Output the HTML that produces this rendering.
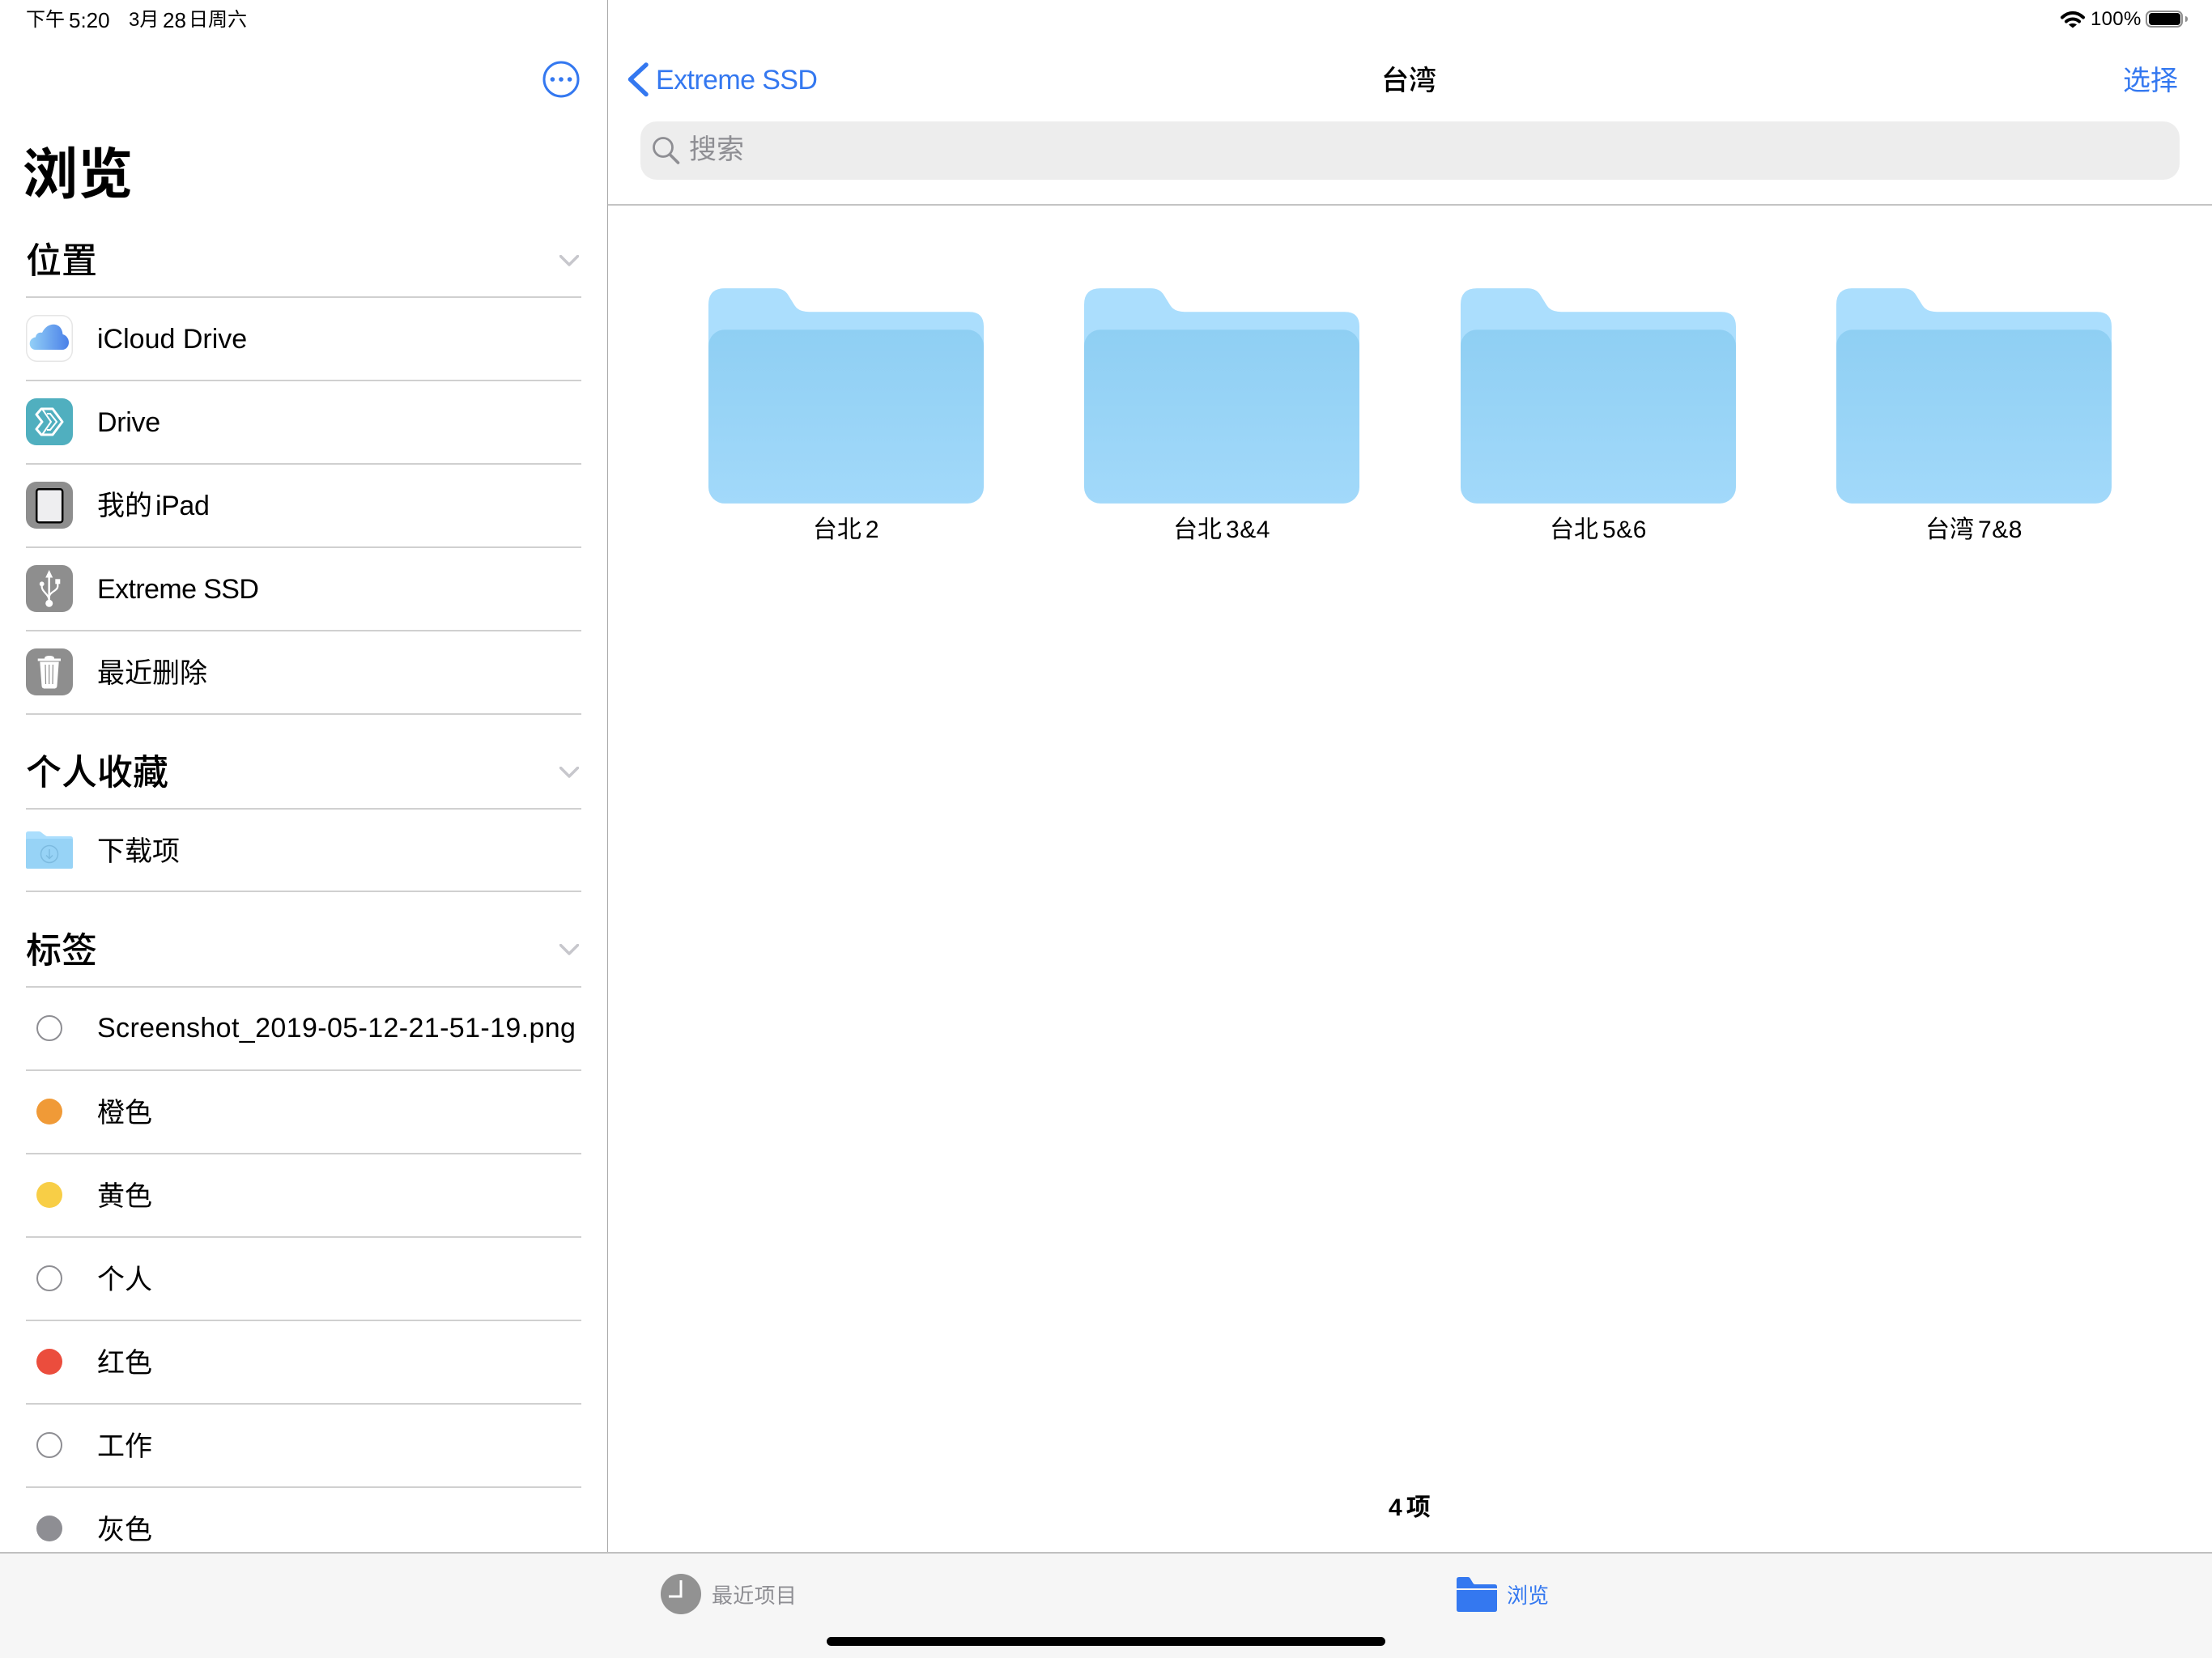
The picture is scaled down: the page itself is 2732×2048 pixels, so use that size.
<!DOCTYPE html>
<html lang="zh-CN">
<head>
<meta charset="utf-8">
<title>浏览</title>
<style>
html,body{margin:0;padding:0;width:2732px;height:2048px;overflow:hidden;background:#fff}
body{position:relative;font-family:"Liberation Sans","Noto Sans CJK SC",sans-serif;color:#000}
.t{position:absolute;white-space:nowrap;line-height:60px;height:60px;font-size:34px}
.h{font-size:44px;font-weight:500}
.s{font-size:24px}
.d{font-size:26px}
.l{position:absolute;left:32px;width:686px;height:2px;background:#d0d0d0}
.i{position:absolute;left:32px;width:58px;height:58px}
.c{position:absolute;left:45px;width:32px;height:32px;border-radius:50%;box-sizing:border-box}
.o{border:2px solid #8e8e93;background:#fff}
.f{position:absolute;top:356px;width:340px;height:266px}
.n{position:absolute;top:625px;width:340px;text-align:center;font-size:30px;line-height:60px;white-space:nowrap}
.n i{font-style:normal;margin-left:5px;letter-spacing:.5px}
.v{position:absolute;left:691px;width:24px;height:14px}
.b{color:#3478f0}
svg{display:block}
</style>
</head>
<body>
<div style="position:absolute;left:750px;top:0;width:1px;height:1917px;background:#a8a8a8"></div>

<!-- status bar -->
<div class="t s" style="left:32px;top:-5px">下午</div>
<div class="t d" style="left:85px;top:-5px">5:20</div>
<div class="t s" style="left:159px;top:-5px">3月</div>
<div class="t d" style="left:201px;top:-5px">28</div>
<div class="t s" style="left:233px;top:-5px">日周六</div>
<svg style="position:absolute;left:2544px;top:12px" width="32" height="24" viewBox="0 0 32 24">
<path d="M3 9.500C11 2 21 2 29 9.500" fill="none" stroke="#000" stroke-width="4" stroke-linecap="round"/>
<path d="M8 14.500C12.500 10.500 19.500 10.500 24 14.500" fill="none" stroke="#000" stroke-width="4" stroke-linecap="round"/>
<path d="M11 18.500C14 16.300 18 16.300 21 18.500L16 22.500Z" fill="#000"/>
</svg>
<div class="t s" style="left:2582px;top:-6px;letter-spacing:0.3px">100%</div>
<div style="position:absolute;left:2650px;top:13px;width:46px;height:21px;box-sizing:border-box;border:2px solid #8e8e8e;border-radius:7px"></div>
<div style="position:absolute;left:2654px;top:16px;width:39px;height:15px;background:#000;border-radius:4px"></div>
<div style="position:absolute;left:2699px;top:20px;width:3px;height:7px;background:#8e8e8e;border-radius:0 3px 3px 0"></div>

<!-- sidebar -->
<svg style="position:absolute;left:670px;top:75px" width="46" height="46" viewBox="0 0 46 46">
<circle cx="23" cy="23" r="21" fill="none" stroke="#3478f0" stroke-width="3"/>
<circle cx="12.400" cy="23" r="2.800" fill="#3478f0"/><circle cx="23" cy="23" r="2.800" fill="#3478f0"/><circle cx="33.600" cy="23" r="2.800" fill="#3478f0"/>
</svg>
<div class="t" style="left:28px;top:176px;font-size:68px;line-height:80px;height:80px;font-weight:700">浏览</div>

<div class="t h" style="left:32px;top:293px">位置</div>
<svg class="v" style="top:315px" viewBox="0 0 24 14"><path d="M1.500 1.500L12 12L22.500 1.500" fill="none" stroke="#c7c7cc" stroke-width="3.500" stroke-linecap="round" stroke-linejoin="round"/></svg>
<div class="l" style="top:366px"></div>

<svg class="i" style="top:389px" viewBox="0 0 58 58">
<defs><linearGradient id="cl" x1="0" x2="1" y1="0" y2="0"><stop offset="0" stop-color="#93d0f7"/><stop offset="1" stop-color="#4a80e8"/></linearGradient></defs>
<rect x=".75" y=".75" width="56.500" height="56.500" rx="13" fill="#fff" stroke="#e6e6e6" stroke-width="1.500"/>
<path d="M12 43C7 43 4.700 39 4.700 35.500C4.700 31 8 28 12 27.500C12.500 23.500 16 21 20 22C23 15 29 11.700 34 11.700C41 11.700 45 17 45.500 24C50 25 53 29.500 53 34C53 39 49.500 43 45 43Z" fill="url(#cl)"/>
</svg>
<div class="t" style="left:120px;top:389px">iCloud Drive</div>
<div class="l" style="top:469px"></div>

<svg class="i" style="top:492px" viewBox="0 0 58 58">
<rect width="58" height="58" rx="13" fill="#50afbf"/>
<path d="M19 13H33L45 29L33 45H19L13 38L20 29L13 20Z" fill="none" stroke="#fff" stroke-width="3" stroke-linejoin="round"/>
<path d="M20 13L31 29L20 45M26 19H30L38 29L30 39H26" fill="none" stroke="#fff" stroke-width="2"/>
</svg>
<div class="t" style="left:120px;top:492px;letter-spacing:-.3px">Drive</div>
<div class="l" style="top:572px"></div>

<svg class="i" style="top:595px" viewBox="0 0 58 58">
<rect width="58" height="58" rx="13" fill="#8e8e8e"/>
<rect x="13.200" y="9.200" width="32" height="41" rx="3" fill="#eeeef0" stroke="#000" stroke-width="2.500"/>
</svg>
<div class="t" style="left:120px;top:595px">我的<span style="margin-left:4px;letter-spacing:-.4px">iPad</span></div>
<div class="l" style="top:675px"></div>

<svg class="i" style="top:698px" viewBox="0 0 58 58">
<rect width="58" height="58" rx="13" fill="#8e8e8e"/>
<path d="M28.700 6L33.200 15.500H24.200Z" fill="#fff"/>
<path d="M28.700 15V46" stroke="#fff" stroke-width="2.600" fill="none"/>
<circle cx="28.700" cy="47.300" r="4.500" fill="#fff"/>
<circle cx="19.700" cy="23.300" r="2.900" fill="#fff"/>
<path d="M19.700 23V27C19.700 33 28.700 36 28.700 44" stroke="#fff" stroke-width="2.200" fill="none"/>
<rect x="36.300" y="17.300" width="6" height="6" fill="#fff"/>
<path d="M39.300 23V26C39.300 32 28.700 33 28.700 40" stroke="#fff" stroke-width="2.200" fill="none"/>
</svg>
<div class="t" style="left:120px;top:698px;letter-spacing:-.6px">Extreme SSD</div>
<div class="l" style="top:778px"></div>

<svg class="i" style="top:801px" viewBox="0 0 58 58">
<rect width="58" height="58" rx="13" fill="#8e8e8e"/>
<path d="M23 12.500C23 10 25 9 29 9C33 9 35 10 35 12.500Z" fill="#fff"/>
<rect x="14.700" y="12.500" width="28.300" height="3" fill="#fff"/>
<path d="M17.300 16.500H40.700L38.500 46C38.300 48.500 37 49.500 35 49.500H23C21 49.500 19.700 48.500 19.500 46Z" fill="#fff"/>
<path d="M24 20L24.500 44M28.700 20V44M33.400 20L33 44" stroke="#8e8e8e" stroke-width="1.200" fill="none"/>
</svg>
<div class="t" style="left:120px;top:802px">最近删除</div>
<div class="l" style="top:881px"></div>

<div class="t h" style="left:32px;top:925px">个人收藏</div>
<svg class="v" style="top:947px" viewBox="0 0 24 14"><path d="M1.500 1.500L12 12L22.500 1.500" fill="none" stroke="#c7c7cc" stroke-width="3.500" stroke-linecap="round" stroke-linejoin="round"/></svg>
<div class="l" style="top:998px"></div>

<svg class="i" style="top:1027px;height:46px" viewBox="0 0 58 46">
<path d="M0 3Q0 0 3 0H16Q18 0 20 2L24 5Q25 6 27 6H55Q58 6 58 9V20H0Z" fill="#abdefd"/>
<path d="M2 9H56Q58 9 58 11V44Q58 46 56 46H2Q0 46 0 44V11Q0 9 2 9Z" fill="#97d3f6"/>
<circle cx="29" cy="28" r="10.500" fill="none" stroke="#7dbbe0" stroke-width="1.500"/>
<path d="M29 22V33M25 29.500L29 33.500L33 29.500" fill="none" stroke="#7dbbe0" stroke-width="1.500"/>
</svg>
<div class="t" style="left:120px;top:1022px">下载项</div>
<div class="l" style="top:1100px"></div>

<div class="t h" style="left:32px;top:1145px">标签</div>
<svg class="v" style="top:1166px" viewBox="0 0 24 14"><path d="M1.500 1.500L12 12L22.500 1.500" fill="none" stroke="#c7c7cc" stroke-width="3.500" stroke-linecap="round" stroke-linejoin="round"/></svg>
<div class="l" style="top:1218px"></div>

<div class="c o" style="top:1254px"></div>
<div class="t" style="left:120px;top:1240px;letter-spacing:.38px">Screenshot_2019-05-12-21-51-19.png</div>
<div class="l" style="top:1321px"></div>
<div class="c" style="top:1357px;background:#f09a37"></div>
<div class="t" style="left:120px;top:1345px">橙色</div>
<div class="l" style="top:1424px"></div>
<div class="c" style="top:1460px;background:#f8ce46"></div>
<div class="t" style="left:120px;top:1448px">黄色</div>
<div class="l" style="top:1527px"></div>
<div class="c o" style="top:1563px"></div>
<div class="t" style="left:120px;top:1551px">个人</div>
<div class="l" style="top:1630px"></div>
<div class="c" style="top:1666px;background:#eb4d3d"></div>
<div class="t" style="left:120px;top:1654px">红色</div>
<div class="l" style="top:1733px"></div>
<div class="c o" style="top:1769px"></div>
<div class="t" style="left:120px;top:1757px">工作</div>
<div class="l" style="top:1836px"></div>
<div class="c" style="top:1872px;background:#8e8e93"></div>
<div class="t" style="left:120px;top:1860px">灰色</div>

<!-- nav -->
<svg style="position:absolute;left:772px;top:74px" width="32" height="48" viewBox="0 0 32 48">
<path d="M26 6L6.500 24L26 42.500" fill="none" stroke="#3478f0" stroke-width="5.500" stroke-linecap="round" stroke-linejoin="round"/>
</svg>
<div class="t b" style="left:810px;top:69px;letter-spacing:-.6px">Extreme SSD</div>
<div class="t" style="left:1706px;top:70px;font-weight:500">台湾</div>
<div class="t b" style="left:2622px;top:70px">选择</div>
<div style="position:absolute;left:791px;top:150px;width:1901px;height:72px;background:#ededed;border-radius:20px"></div>
<svg style="position:absolute;left:804px;top:168px" width="38" height="36" viewBox="0 0 38 36">
<circle cx="15" cy="14" r="11.500" fill="none" stroke="#8e8e93" stroke-width="2.800"/>
<path d="M23.500 23L33.500 33" stroke="#8e8e93" stroke-width="3.600" stroke-linecap="round"/>
</svg>
<div class="t" style="left:851px;top:155px;color:#8e8e93">搜索</div>
<div style="position:absolute;left:751px;top:252px;width:1981px;height:2px;background:#c4c4c4"></div>

<!-- folders -->
<svg class="f" style="left:875px" viewBox="0 0 339 265"><defs><linearGradient id="fg" x1="0" x2="0" y1="0" y2="1"><stop offset="0" stop-color="#8fcff3"/><stop offset="1" stop-color="#a2d9fa"/></linearGradient></defs><path d="M0 20Q0 0 20 0H82Q93 0 98 8L106 21Q111 29 124 29H321Q339 29 339 47V200H0Z" fill="#abdefd"/><rect y="51" width="339" height="214" rx="20" fill="url(#fg)"/></svg>
<div class="n" style="left:875px">台北<i>2</i></div>
<svg class="f" style="left:1339px" viewBox="0 0 339 265"><path d="M0 20Q0 0 20 0H82Q93 0 98 8L106 21Q111 29 124 29H321Q339 29 339 47V200H0Z" fill="#abdefd"/><rect y="51" width="339" height="214" rx="20" fill="url(#fg)"/></svg>
<div class="n" style="left:1339px">台北<i>3&amp;4</i></div>
<svg class="f" style="left:1804px" viewBox="0 0 339 265"><path d="M0 20Q0 0 20 0H82Q93 0 98 8L106 21Q111 29 124 29H321Q339 29 339 47V200H0Z" fill="#abdefd"/><rect y="51" width="339" height="214" rx="20" fill="url(#fg)"/></svg>
<div class="n" style="left:1804px">台北<i>5&amp;6</i></div>
<svg class="f" style="left:2268px" viewBox="0 0 339 265"><path d="M0 20Q0 0 20 0H82Q93 0 98 8L106 21Q111 29 124 29H321Q339 29 339 47V200H0Z" fill="#abdefd"/><rect y="51" width="339" height="214" rx="20" fill="url(#fg)"/></svg>
<div class="n" style="left:2268px">台湾<i>7&amp;8</i></div>

<div class="t" style="left:1715px;top:1833px;font-size:30px;font-weight:700">4<span style="margin-left:5px">项</span></div>

<!-- tab bar -->
<div style="position:absolute;left:0;top:1917px;width:2732px;height:131px;background:#f6f6f6;border-top:2px solid #c0c0c0;box-sizing:border-box"></div>
<svg style="position:absolute;left:816px;top:1944px" width="50" height="50" viewBox="0 0 50 50">
<circle cx="25" cy="25" r="25" fill="#929292"/>
<path d="M25 8V28H10" fill="none" stroke="#fff" stroke-width="3"/>
</svg>
<div class="t" style="left:879px;top:1941px;font-size:26px;letter-spacing:.3px;color:#8e8e93">最近项目</div>
<svg style="position:absolute;left:1799px;top:1948px" width="50" height="43" viewBox="0 0 50 43">
<path d="M0 3Q0 0 3 0H14Q16 0 17 2L20 7Q21 9 23 9H47Q50 9 50 12V14H0Z" fill="#3478f0"/>
<path d="M0 16H50V40Q50 43 47 43H3Q0 43 0 40Z" fill="#3478f0"/>
</svg>
<div class="t b" style="left:1861px;top:1941px;font-size:26px">浏览</div>
<div style="position:absolute;left:1021px;top:2022px;width:690px;height:11px;background:#000;border-radius:6px"></div>
</body>
</html>
